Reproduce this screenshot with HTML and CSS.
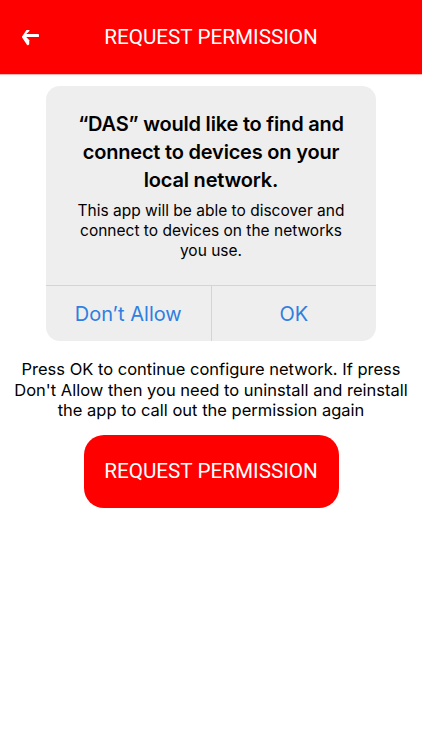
FILE: index.html
```html
<!DOCTYPE html>
<html lang="en">
<head>
    <meta charset="UTF-8">
    <title>Request Permission</title>
    <link rel="stylesheet" href="styles.css">
</head>
<body>
    <div class="header">
        <a href="#" class="back">
            <svg width="17" height="16" viewBox="0 0 448 420">
                <path fill="#fff" d="M190.5 397.5l-22.2 22.2c-9.4 9.4-24.6 9.4-33.9 0L7 226.9c-9.4-9.4-9.4-24.6 0-33.9L134.4 0.3c9.4-9.4 24.6-9.4 33.900 0l22.2 22.2c9.5 9.5 9.3 25-.4 34.3L111.2 132H424c13.3 0 24 10.7 24 24v32c0 13.3-10.7 24-24 24H111.2l79 75.2c9.8 9.3 10 24.8.3 34.3z" transform="translate(0,-26)"/>
            </svg>
        </a>
        <div class="title">REQUEST PERMISSION</div>
    </div>

    <div class="content">
        <div class="alert">
            <div class="alert-body">
                <div class="alert-title">“DAS” would like to find and connect to devices on your local network.</div>
                <div class="alert-msg">This app will be able to discover and connect to devices on the networks you use.</div>
            </div>
            <div class="alert-buttons">
                <div class="alert-btn">Don’t Allow</div>
                <div class="alert-btn">OK</div>
            </div>
        </div>

        <p class="info">Press OK to continue configure network. If press Don't Allow then you need to uninstall and reinstall the app to call out the permission again</p>

        <a href="#" class="request">REQUEST PERMISSION</a>
    </div>
</body>
</html>
```

FILE: styles.css
```css
*{
    padding: 0;
    margin: 0;
    box-sizing: border-box;
}
body{
    background: #fff;
    font-family: Inter, "Liberation Sans", sans-serif;
    color: #000;
}
.header{
    height: 75px;
    background: #ff0000;
    border-bottom: 1px solid #ffb3b3;
    display: flex;
    align-items: center;
    position: relative;
}
.back{
    display: flex;
    position: absolute;
    left: 22px;
    top: 30px;
}
.title{
    flex: 1;
    text-align: center;
    color: #fff;
    font-family: Roboto, sans-serif;
    font-size: 20.7px;
}
.content{
    display: flex;
    flex-direction: column;
    align-items: center;
    padding-top: 11px;
}
.alert{
    width: 330px;
    background: #eeeeef;
    border-radius: 14px;
    overflow: hidden;
}
.alert-body{
    padding: 24px 16px 24px;
    text-align: center;
}
.alert-title{
    font-size: 20px;
    font-weight: 600;
    line-height: 28px;
    letter-spacing: -0.2px;
}
.alert-msg{
    font-size: 15.5px;
    line-height: 20px;
    margin: 7px 12px 0;
}
.alert-buttons{
    display: flex;
    border-top: 1px solid #d4d4d6;
    height: 56px;
}
.alert-btn{
    flex: 1;
    display: flex;
    align-items: center;
    justify-content: center;
    color: #2f7fdf;
    font-size: 20px;
}
.alert-btn + .alert-btn{
    border-left: 1px solid #d4d4d6;
}
.info{
    width: 410px;
    text-align: center;
    font-size: 16.5px;
    line-height: 20.5px;
    margin-top: 18px;
}
.request{
    display: flex;
    align-items: center;
    justify-content: center;
    width: 255px;
    height: 73px;
    margin-top: 14px;
    background: #ff0000;
    border-radius: 20px;
    color: #fff;
    font-family: Roboto, sans-serif;
    font-size: 20.7px;
    text-decoration: none;
}
```
